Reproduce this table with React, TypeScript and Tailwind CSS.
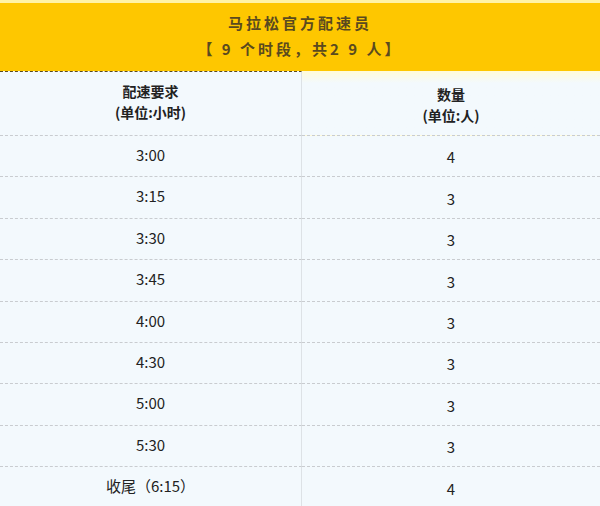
const rows: [string, string][] = [
  ["3:00", "4"],
  ["3:15", "3"],
  ["3:30", "3"],
  ["3:45", "3"],
  ["4:00", "3"],
  ["4:30", "3"],
  ["5:00", "3"],
  ["5:30", "3"],
  ["收尾（6:15）", "4"],
]

export default function App() {
  return (
    <div
      className="w-[600px] h-[506px] overflow-hidden bg-[#f3f9fd] text-[#222]"
      style={{ fontFamily: '"Noto Sans CJK SC", "Noto Sans", sans-serif' }}
    >
      {/* title */}
      <div className="h-[3px] bg-[#fff3a6]" />
      <div className="h-[68px] bg-[#fec700] flex flex-col items-center justify-center text-[#5a4a1f] font-bold text-[15px] tracking-[3px] leading-[26px]">
        <div className="-mt-[2px]">马拉松官方配速员</div>
        <div>【 9 个时段，共2 9 人】</div>
      </div>

      {/* column heads */}
      <div className="grid grid-cols-[302px_1fr]">
        <div className="h-[65px] border-t border-b border-dashed border-t-[#5a4a1f] border-b-[#c9ccd0] border-r [border-right-style:solid] border-r-[#dde2e6] flex flex-col items-center justify-center font-bold text-[14px] leading-[21px] pb-[4px]">
          <div>配速要求</div>
          <div>(单位:小时)</div>
        </div>
        <div className="h-[65px] bg-gradient-to-b from-[#fffbd9] to-[#f3f9fd] to-[12px] border-b border-dashed border-[#c9ccd0] flex flex-col items-center justify-center font-bold text-[14px] leading-[21px] pt-[4px]">
          <div>数量</div>
          <div>(单位:人)</div>
        </div>

        {rows.map(([t, n], i) => (
          <div key={i} className="contents">
            <div className="h-[41.4px] border-b border-dashed border-b-[#c9ccd0] border-r [border-right-style:solid] border-r-[#dde2e6] flex items-center justify-center text-[15px] pb-[2px]">
              {t}
            </div>
            <div className="h-[41.4px] border-b border-dashed border-[#c9ccd0] flex items-center justify-center text-[15px] pt-[3px]">
              {n}
            </div>
          </div>
        ))}
      </div>
    </div>
  )
}
